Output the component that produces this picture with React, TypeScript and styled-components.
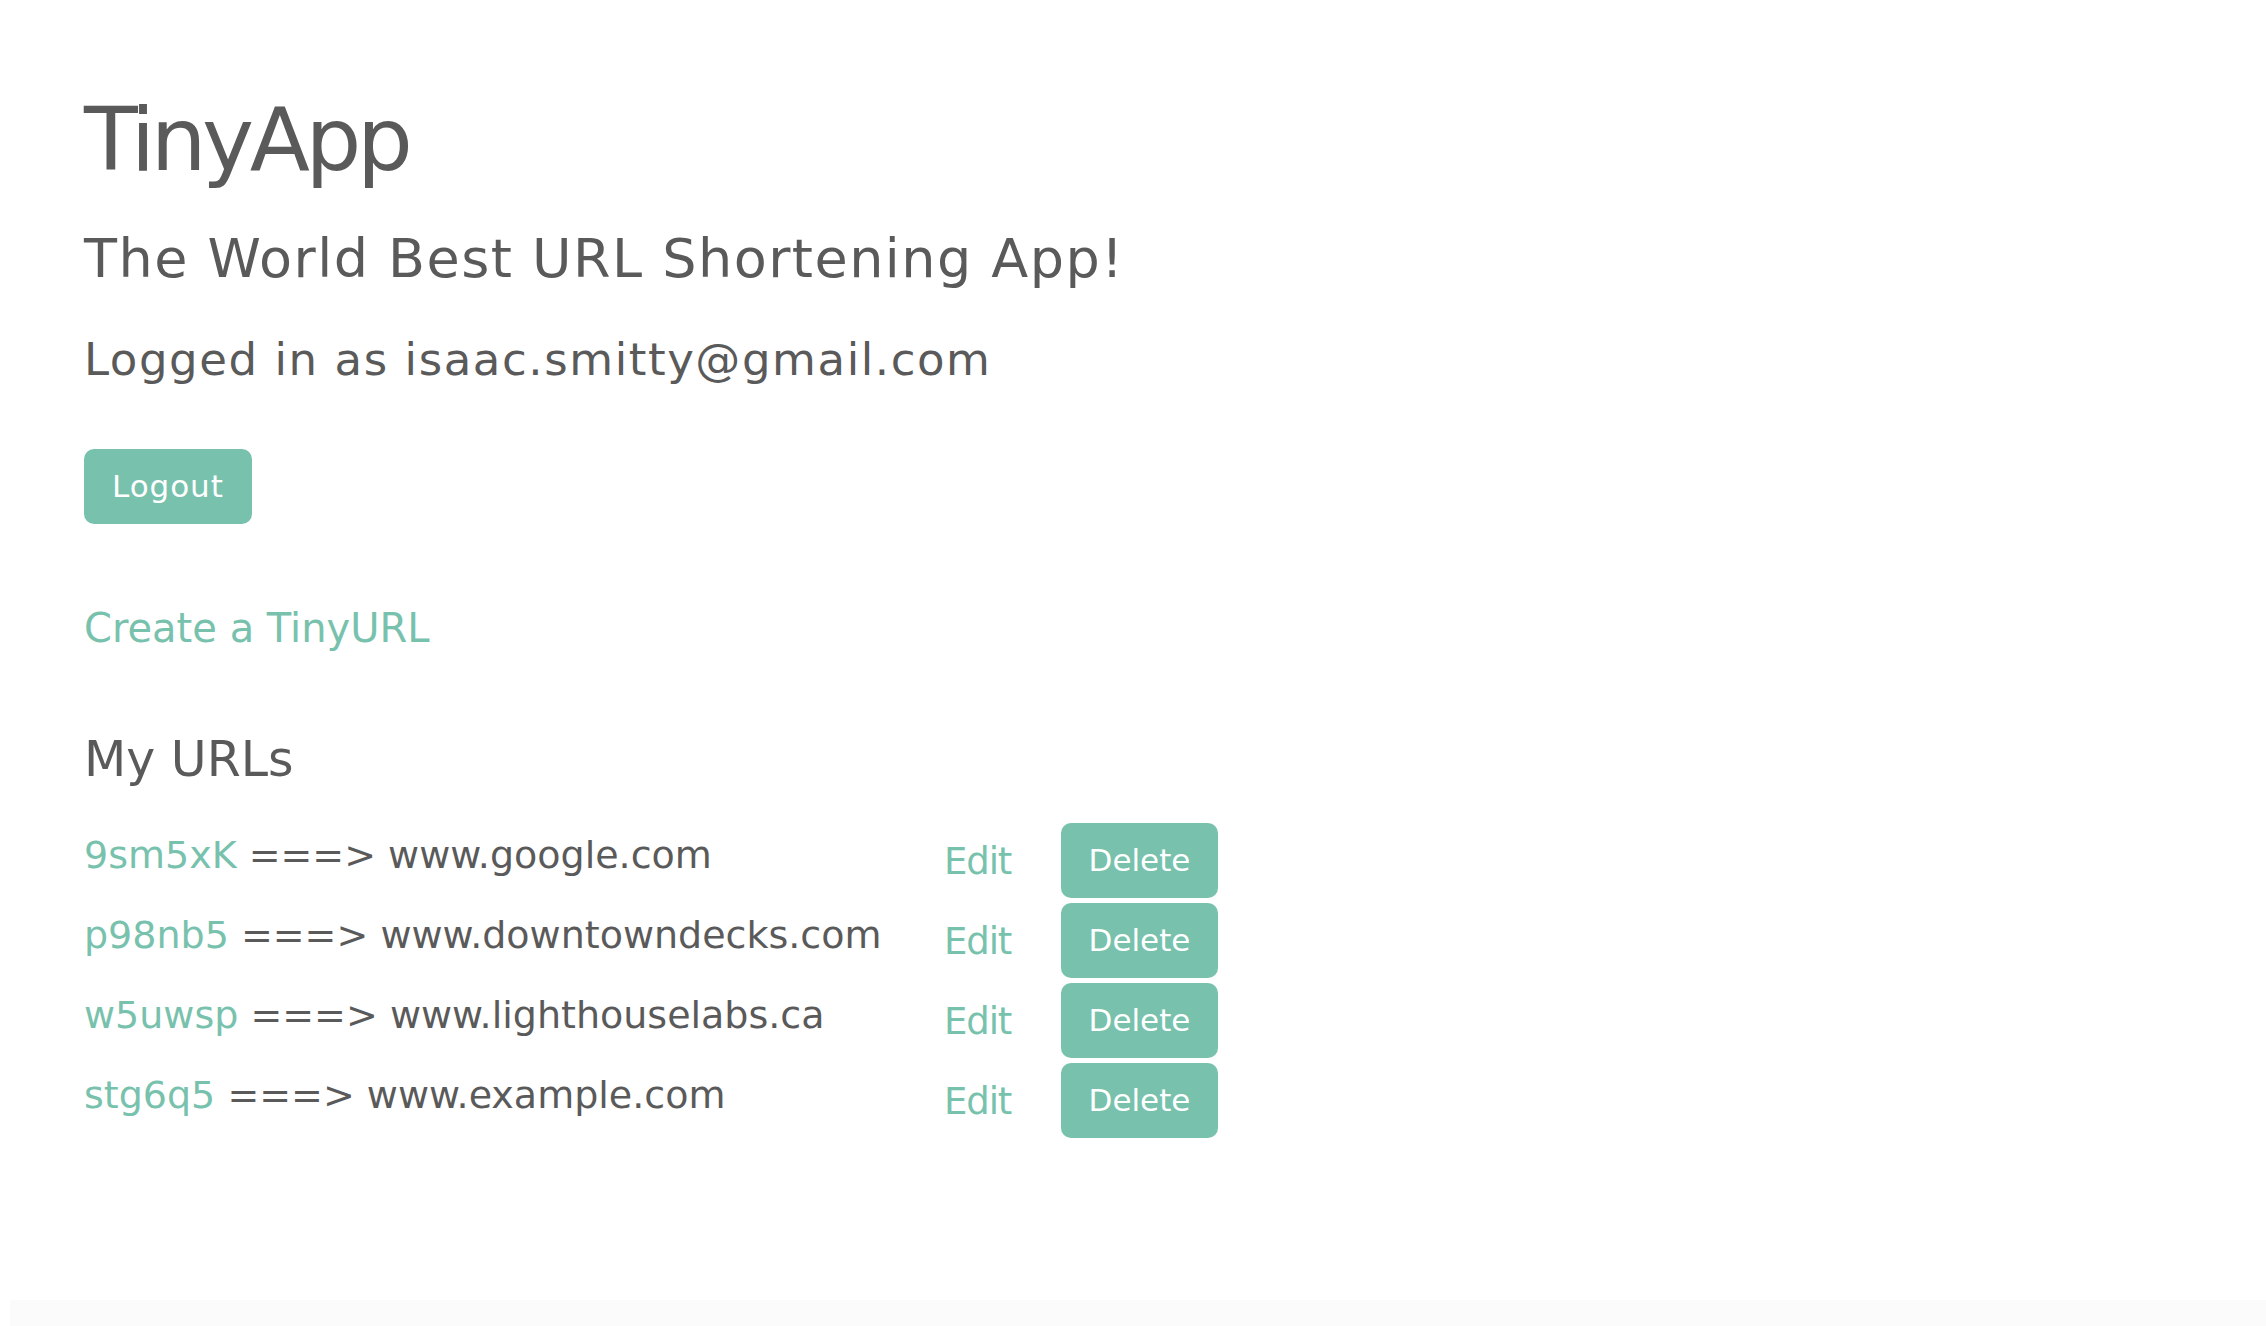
import React from "react";
import styled, { createGlobalStyle } from "styled-components";

const Global = createGlobalStyle`
  html, body { margin: 0; padding: 0; background: #ffffff; }
  body {
    font-family: "DejaVu Sans", Inter, sans-serif;
    color: #5a5a5a;
    font-feature-settings: "liga" 0, "calt" 0;
    font-variant-ligatures: none;
  }
  * { box-sizing: border-box; }
`;

const TEAL = "#78c2ad";
const INK = "#5a5a5a";

const Page = styled.div`
  min-height: 100vh;
  display: flex;
  flex-direction: column;
`;

const Main = styled.main`
  display: flex;
  flex-direction: column;
  align-items: flex-start;
  padding: 96px 0 0 84px;
`;

const Title = styled.h1`
  margin: 0;
  font-size: 88px;
  font-weight: 400;
  line-height: 1;
  color: ${INK};
  letter-spacing: -0.05em;
`;

const Subtitle = styled.h2`
  margin: 48px 0 0;
  font-size: 54px;
  font-weight: 400;
  line-height: 1;
  color: ${INK};
  letter-spacing: 0.027em;
`;

const Status = styled.h3`
  margin: 51px 0 0;
  font-size: 45px;
  font-weight: 400;
  line-height: 1;
  color: ${INK};
  letter-spacing: 0.035em;
`;

const Button = styled.button`
  display: flex;
  align-items: center;
  justify-content: center;
  height: 75px;
  padding: 0 28px;
  border: none;
  border-radius: 10px;
  background: ${TEAL};
  color: #ffffff;
  font-family: inherit;
  font-size: 31px;
  line-height: 1;
  cursor: pointer;
`;

const LogoutButton = styled(Button)`
  margin-top: 67px;
  letter-spacing: 0.03em;
`;

const CreateLink = styled.a`
  margin-top: 84px;
  font-size: 40px;
  line-height: 1;
  color: ${TEAL};
  text-decoration: none;
`;

const SectionTitle = styled.h3`
  margin: 87px 0 0;
  font-size: 49px;
  font-weight: 400;
  line-height: 1;
  color: ${INK};
`;

const UrlList = styled.div`
  margin-top: 39px;
  display: grid;
  grid-template-columns: 860px 117px 157px;
  row-gap: 5px;
  align-items: start;
`;

const UrlText = styled.div`
  padding-top: 13px;
  font-size: 38px;
  line-height: 1;
  color: ${INK};
  white-space: nowrap;
`;

const ShortLink = styled.a`
  color: ${TEAL};
  text-decoration: none;
`;

const EditLink = styled.a`
  padding-top: 20px;
  font-size: 37px;
  line-height: 1;
  font-weight: 400;
  color: ${TEAL};
  text-decoration: none;
  letter-spacing: -0.03em;
`;

const DeleteButton = styled(Button)`
  width: 157px;
  padding: 0;
`;

const Footer = styled.div`
  margin-top: auto;
  margin-left: 10px;
  height: 26px;
  background: #fbfbfb;
`;

const urls = [
  { id: "9sm5xK", long: "www.google.com" },
  { id: "p98nb5", long: "www.downtowndecks.com" },
  { id: "w5uwsp", long: "www.lighthouselabs.ca" },
  { id: "stg6q5", long: "www.example.com" },
];

export default function App() {
  return (
    <Page>
      <Global />
      <Main>
        <Title>TinyApp</Title>
        <Subtitle>The World Best URL Shortening App!</Subtitle>
        <Status>Logged in as isaac.smitty@gmail.com</Status>
        <LogoutButton>Logout</LogoutButton>
        <CreateLink href="#">Create a TinyURL</CreateLink>
        <SectionTitle>My URLs</SectionTitle>
        <UrlList>
          {urls.map((u) => (
            <React.Fragment key={u.id}>
              <UrlText>
                <ShortLink href="#">{u.id}</ShortLink> ===&gt; {u.long}
              </UrlText>
              <EditLink href="#">Edit</EditLink>
              <DeleteButton>Delete</DeleteButton>
            </React.Fragment>
          ))}
        </UrlList>
      </Main>
      <Footer />
    </Page>
  );
}
